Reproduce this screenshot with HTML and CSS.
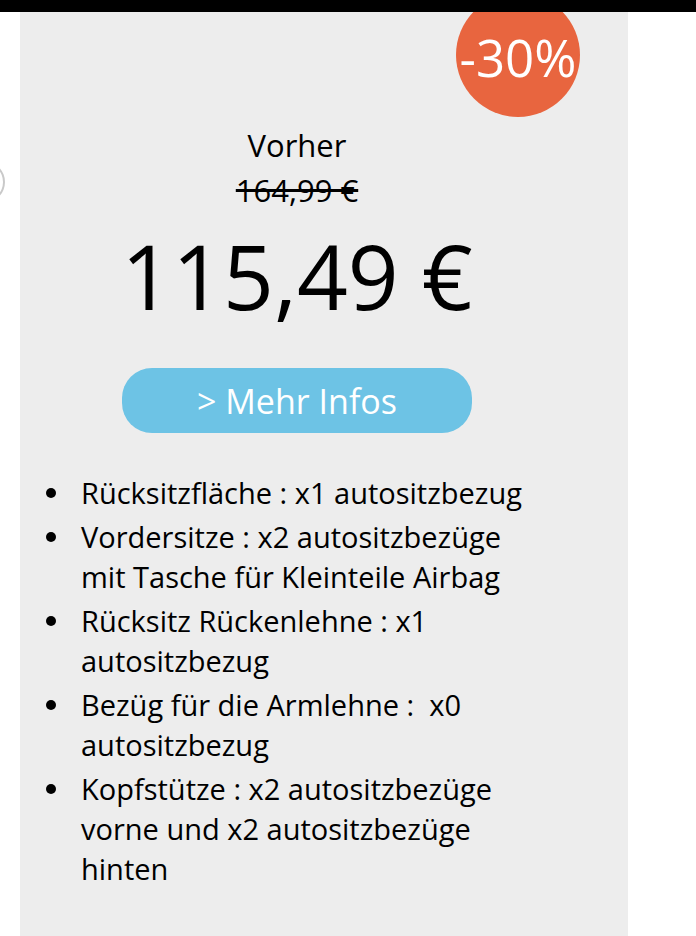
FILE: index.html
```html
<!DOCTYPE html>
<html lang="de">
<head>
    <meta charset="UTF-8">
    <meta name="viewport" content="width=device-width, initial-scale=1.0">
    <title>Autositzbezüge</title>
    <link rel="stylesheet" href="styles.css">
</head>
<body>

<div class="top-bar"></div>

<div class="page">
    <span class="slider-arrow"></span>

    <div class="offer-card">
        <div class="discount-badge">-30%</div>

        <div class="offer-content">
            <p class="old-label">Vorher</p>
            <p class="old-price">164,99 €</p>
            <p class="new-price">115,49 €</p>

            <a class="more-button" href="#">&gt; Mehr Infos</a>

            <ul class="feature-list">
                <li><span>Rücksitzfläche : x1 autositzbezug</span></li>
                <li><span>Vordersitze : x2 autositzbezüge mit Tasche für Kleinteile Airbag</span></li>
                <li><span>Rücksitz Rückenlehne : x1 autositzbezug</span></li>
                <li><span>Bezüg für die Armlehne : &nbsp;x0 autositzbezug</span></li>
                <li><span>Kopfstütze : x2 autositzbezüge vorne und x2 autositzbezüge hinten</span></li>
            </ul>
        </div>
    </div>
</div>

</body>
</html>
```

FILE: styles.css
```css
body {
    margin: 0;
    background-color: #fff;
    font-family: "Open Sans", "Noto Sans", sans-serif;
    color: #000;
    overflow: hidden;
}
.top-bar {
    height: 12px;
    background-color: #000;
}
.page {
    position: relative;
    padding-left: 20px;
}
.slider-arrow {
    position: absolute;
    left: -33px;
    top: 150px;
    width: 34px;
    height: 36px;
    border: 2px solid #c9c9c9;
    border-radius: 50%;
}
.offer-card {
    position: relative;
    width: 608px;
    min-height: 924px;
    background-color: #ededed;
    overflow: hidden;
}
.discount-badge {
    position: absolute;
    left: 436px;
    top: -19px;
    width: 124px;
    height: 124px;
    padding-top: 4px;
    box-sizing: border-box;
    border-radius: 50%;
    background-color: #e8653f;
    color: #fff;
    font-size: 51px;
    display: flex;
    justify-content: center;
    align-items: center;
}
.offer-content {
    width: 512px;
    margin-left: 21px;
    padding-top: 111px;
    display: flex;
    flex-direction: column;
    align-items: center;
}
.offer-content p {
    margin: 0;
}
.old-label,
.old-price {
    font-size: 31px;
    line-height: 45px;
}
.old-price {
    text-decoration: line-through;
}
.new-price {
    margin-top: 10px !important;
    font-size: 89px;
    line-height: 106px;
}
.more-button {
    margin-top: 39px;
    width: 350px;
    height: 65px;
    border-radius: 30px;
    background-color: #6dc3e5;
    color: #fff;
    font-size: 34px;
    text-decoration: none;
    display: flex;
    justify-content: center;
    align-items: center;
}
.feature-list {
    align-self: stretch;
    margin: 40px 15px 0 0;
    padding-left: 5px;
    list-style: none;
    font-size: 29px;
    line-height: 40px;
}
.feature-list li {
    display: flex;
    margin-bottom: 4px;
}
.feature-list li::before {
    content: "";
    flex: none;
    width: 10px;
    height: 10px;
    margin: 15px 25px 0 0;
    border-radius: 50%;
    background-color: #000;
}
```
